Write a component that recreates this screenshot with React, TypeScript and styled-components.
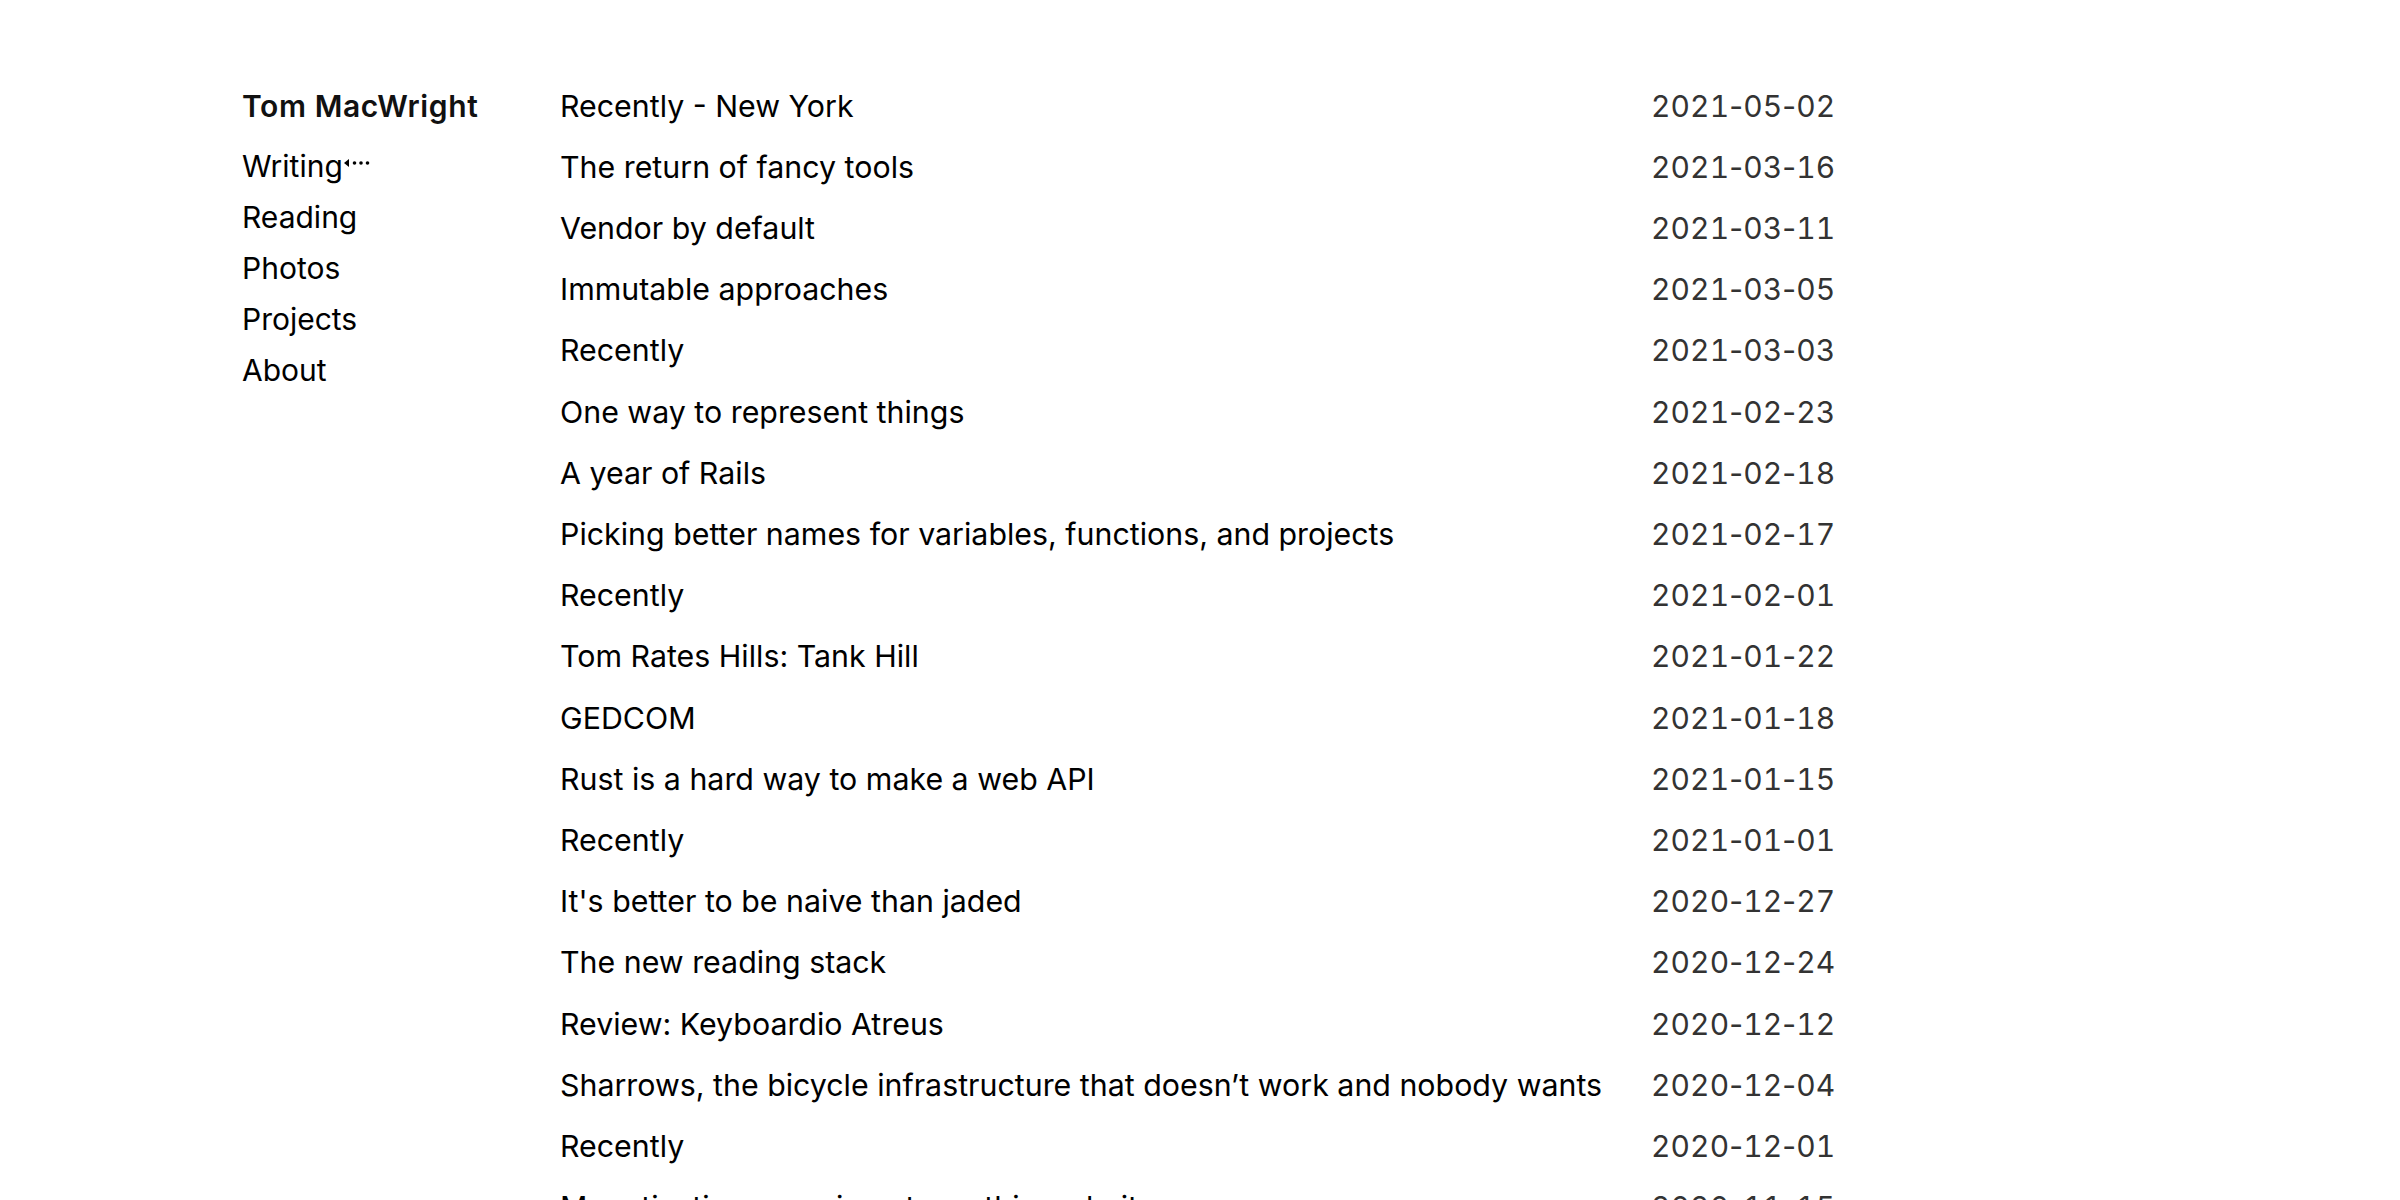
import React from "react";
import styled, { createGlobalStyle } from "styled-components";

const GlobalStyle = createGlobalStyle`
  html, body {
    margin: 0;
    padding: 0;
    background: #ffffff;
  }
  body {
    font-family: Inter, "Noto Sans", "Liberation Sans", sans-serif;
    color: #000;
    -webkit-font-smoothing: antialiased;
  }
`;

const Page = styled.div`
  display: grid;
  grid-template-columns: 318px auto;
  align-items: start;
  padding: 75.5px 0 0 242px;
  font-size: 30px;
`;

const Sidebar = styled.nav`
  display: flex;
  flex-direction: column;
`;

const Name = styled.a`
  font-weight: 600;
  letter-spacing: 0.6px;
  line-height: 61.2px;
  color: #111;
  text-decoration: none;
  margin-bottom: 4px;
`;

const NavLink = styled.a`
  display: inline-flex;
  align-items: center;
  line-height: 51px;
  color: #000;
  text-decoration: none;
`;

const Marker = styled.svg`
  width: 34px;
  height: 12px;
  margin-left: 1px;
  margin-top: -6px;
  flex: none;
`;

const List = styled.div`
  display: grid;
  grid-template-columns: 1091px auto;
`;

const Title = styled.a`
  font-size: 30.35px;
  line-height: 61.2px;
  color: #000;
  text-decoration: none;
  white-space: nowrap;
`;

const Date = styled.span`
  line-height: 61.2px;
  color: #333;
  white-space: nowrap;
  letter-spacing: 0.1px;
`;

const Digits = styled.span`
  font-variant-numeric: tabular-nums;
`;

const posts: [string, string][] = [
  ["Recently - New York", "2021-05-02"],
  ["The return of fancy tools", "2021-03-16"],
  ["Vendor by default", "2021-03-11"],
  ["Immutable approaches", "2021-03-05"],
  ["Recently", "2021-03-03"],
  ["One way to represent things", "2021-02-23"],
  ["A year of Rails", "2021-02-18"],
  ["Picking better names for variables, functions, and projects", "2021-02-17"],
  ["Recently", "2021-02-01"],
  ["Tom Rates Hills: Tank Hill", "2021-01-22"],
  ["GEDCOM", "2021-01-18"],
  ["Rust is a hard way to make a web API", "2021-01-15"],
  ["Recently", "2021-01-01"],
  ["It's better to be naive than jaded", "2020-12-27"],
  ["The new reading stack", "2020-12-24"],
  ["Review: Keyboardio Atreus", "2020-12-12"],
  ["Sharrows, the bicycle infrastructure that doesn\u2019t work and nobody wants", "2020-12-04"],
  ["Recently", "2020-12-01"],
  ["Monetization experiments on this website", "2020-11-15"],
  ["Recently", "2020-11-01"],
  ["Speed is a feature", "2020-10-20"],
];

const navItems = ["Writing", "Reading", "Photos", "Projects", "About"];

function DateText({ value }: { value: string }) {
  const parts = value.split("-");
  return (
    <Date>
      {parts.map((p, i) => (
        <React.Fragment key={i}>
          {i > 0 && "-"}
          <Digits>{p}</Digits>
        </React.Fragment>
      ))}
    </Date>
  );
}

export default function App() {
  return (
    <>
      <GlobalStyle />
      <Page>
        <Sidebar>
          <Name href="#">Tom MacWright</Name>
          {navItems.map((item, i) => (
            <NavLink key={item} href="#">
              {item}
              {i === 0 && (
                <Marker viewBox="0 0 34 12">
                  <polygon points="0,6 5,2 5,10" fill="#000" />
                  <circle cx="10.5" cy="6" r="1.8" fill="#000" />
                  <circle cx="17" cy="6" r="1.8" fill="#000" />
                  <circle cx="23.5" cy="6" r="1.8" fill="#000" />
                </Marker>
              )}
            </NavLink>
          ))}
        </Sidebar>
        <List>
          {posts.map(([title, date], i) => (
            <React.Fragment key={i}>
              <Title href="#">{title}</Title>
              <DateText value={date} />
            </React.Fragment>
          ))}
        </List>
      </Page>
    </>
  );
}
